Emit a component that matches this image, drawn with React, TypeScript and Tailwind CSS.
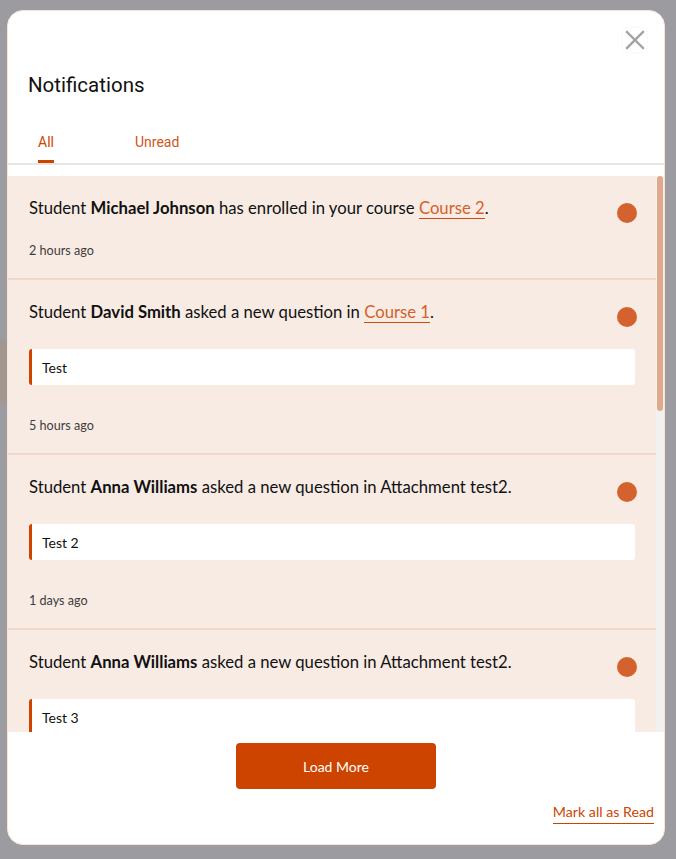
import React, { useState } from "react";

interface Notice {
  id: number;
  student: string;
  action: string;
  course: string;
  linked: boolean;
  message?: string;
  time: string;
}

const notices: Notice[] = [
  { id: 1, student: "Michael Johnson", action: "has enrolled in your course", course: "Course 2", linked: true, time: "2 hours ago" },
  { id: 2, student: "David Smith", action: "asked a new question in", course: "Course 1", linked: true, message: "Test", time: "5 hours ago" },
  { id: 3, student: "Anna Williams", action: "asked a new question in", course: "Attachment test2", linked: false, message: "Test 2", time: "1 days ago" },
  { id: 4, student: "Anna Williams", action: "asked a new question in", course: "Attachment test2", linked: false, message: "Test 3", time: "1 days ago" },
  { id: 5, student: "Anna Williams", action: "asked a new question in", course: "Attachment test2", linked: false, message: "Test 4", time: "2 days ago" },
];

const body = "font-['Lato','Open_Sans',sans-serif]";

const NoticeRow: React.FC<{ n: Notice }> = ({ n }) => (
  <div className="border-b-2 border-[#f3d8ca] pl-[21px] pr-[21px] pt-[20px] pb-[19px]">
    <div className="flex items-start">
      <p className={`${body} flex-1 text-[16.7px] leading-6 text-[#111]`}>
        Student <span className="font-bold">{n.student}</span> {n.action}{" "}
        {n.linked ? (
          <span className="text-[#d2622a] border-b-[1.5px] border-[#c84a10]">{n.course}</span>
        ) : (
          n.course
        )}
        .
      </p>
      <span className="mt-[7px] -mr-[2px] w-5 h-5 rounded-full bg-[#d4622e] shrink-0" />
    </div>
    {n.message && (
      <div className={`${body} mt-[22px] h-9 flex items-center bg-white border-l-[3px] border-[#cc4400] rounded-[3px] pl-[10px] text-[14px] text-[#111]`}>
        {n.message}
      </div>
    )}
    <p className={`${body} ${n.message ? "mt-[33px]" : "mt-[20px]"} text-[12.6px] leading-4 text-[#3d3d3d]`}>
      {n.time}
    </p>
  </div>
);

export default function App() {
  const [tab, setTab] = useState<"all" | "unread">("all");

  return (
    <div className="relative w-[676px] h-[859px] bg-[#9b9ba0] overflow-hidden pt-[10px] pl-[7px]">
      {/* page content peeking out behind the overlay */}
      <div className="absolute left-0 top-[340px] w-[10px] h-[63px] bg-[#a39690]" />

      <div className="relative flex flex-col w-[658px] h-[835px] bg-white rounded-[16px] border border-[#f6e4da] overflow-hidden">
        <div className="flex justify-end pt-[17px] pr-[17px]">
          <button className="w-[24px] h-[24px] flex items-center justify-center rounded-[3px] shadow-[0_0_2px_rgba(0,0,0,0.08)]">
            <svg width="20" height="20" viewBox="0 0 20 20" fill="none" stroke="#a3a3a3" strokeWidth="2.4" strokeLinecap="square">
              <path d="M2 2 L18 18 M18 2 L2 18" />
            </svg>
          </button>
        </div>

        <h2 className="font-['Roboto',sans-serif] text-[20.5px] leading-6 text-[#111] pl-[20px] mt-[21px]">
          Notifications
        </h2>

        <div className="flex font-['Roboto',sans-serif] text-[14px] mt-[35px] pl-[30px] border-b-2 border-[#e6e6e6]">
          <button
            onClick={() => setTab("all")}
            className={`pb-[7px] ${tab === "all" ? "text-[#cc4400] border-b-[3px] border-[#cc4400]" : "text-[#d0551c] border-b-[3px] border-transparent"}`}
          >
            All
          </button>
          <button
            onClick={() => setTab("unread")}
            className={`ml-[81px] pb-[7px] ${tab === "unread" ? "text-[#cc4400] border-b-[3px] border-[#cc4400]" : "text-[#d0551c] border-b-[3px] border-transparent"}`}
          >
            Unread
          </button>
        </div>

        <div className="mt-[11px] h-[556px] flex bg-[#f8ebe4]">
          <div className="flex-1 overflow-hidden">
            {notices.map((n) => (
              <NoticeRow key={n.id} n={n} />
            ))}
          </div>
          <div className="w-[8px] bg-[#f1f1f1] flex justify-center">
            <div className="w-[6px] h-[235px] rounded-full bg-[#e2a88c]" />
          </div>
        </div>

        <div className="flex flex-col items-center pt-[11px]">
          <button className={`${body} w-[200px] h-[46px] bg-[#cc4400] text-white text-[14px] rounded-[4px]`}>
            Load More
          </button>
          <div className="self-end pr-[10px] mt-[10px]">
            <button className={`${body} text-[14.2px] leading-5 text-[#cc4400] border-b-[1.5px] border-[#cc4400] pb-[1px]`}>
              Mark all as Read
            </button>
          </div>
        </div>
      </div>
    </div>
  );
}
